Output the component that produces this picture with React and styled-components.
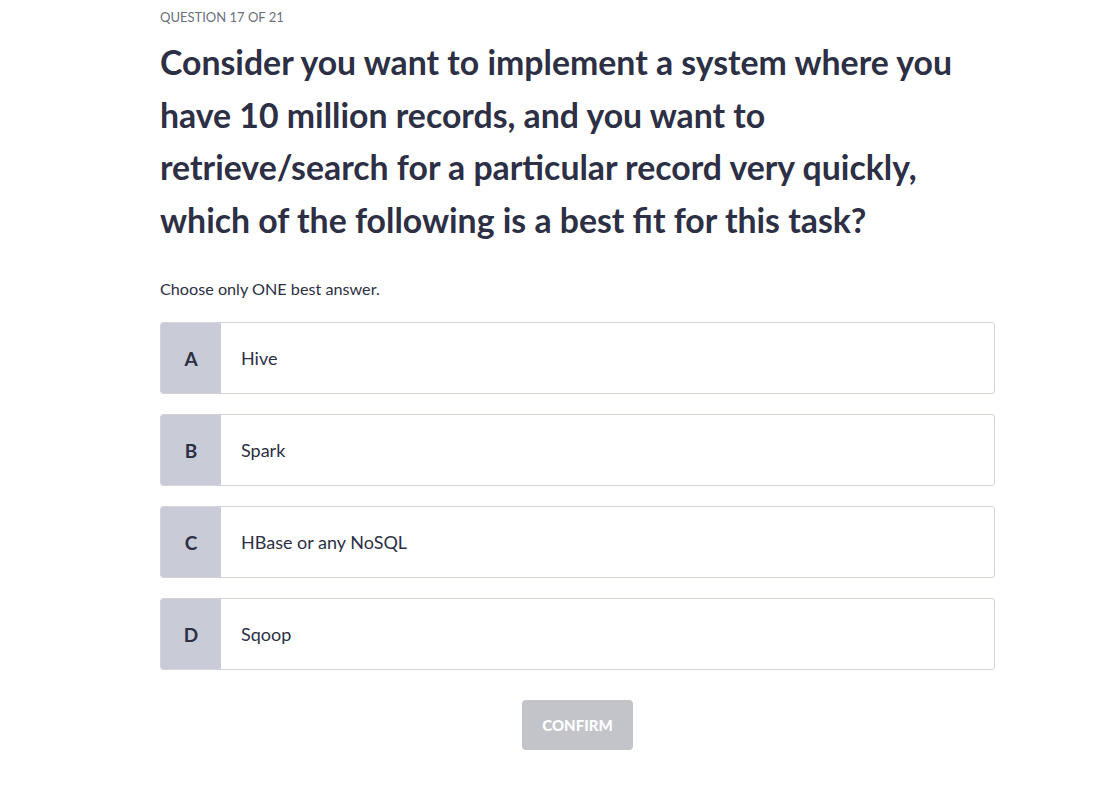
import React from 'react'
import styled, { createGlobalStyle } from 'styled-components'

const GlobalStyle = createGlobalStyle`
  body {
    margin: 0;
    background: #fff;
    font-family: Lato, "Open Sans", sans-serif;
    color: #2d2f45;
  }
`

const Page = styled.div`
  padding: 9px 0 0 160px;
`

const Quiz = styled.div`
  width: 835px;
`

const Counter = styled.div`
  font-size: 13px;
  line-height: 16px;
  color: #6b6f80;
  text-transform: uppercase;
`

const Question = styled.h1`
  margin: 11px 0 0;
  font-size: 33.8px;
  line-height: 52.5px;
  font-weight: 700;
  color: #2d2f45;
`

const Hint = styled.p`
  margin: 33px 0 0;
  font-size: 16.2px;
  line-height: 20px;
`

const Options = styled.div`
  margin-top: 23px;
  display: flex;
  flex-direction: column;
  gap: 20px;
`

const Option = styled.div`
  display: flex;
  height: 72px;
  border: 1px solid #d3d4db;
  border-radius: 3px;
  overflow: hidden;
  box-sizing: border-box;
  cursor: pointer;
`

const Letter = styled.div`
  width: 60px;
  flex-shrink: 0;
  display: flex;
  align-items: center;
  justify-content: center;
  background: #c9ccd6;
  font-size: 19px;
  font-weight: 700;
`

const Label = styled.div`
  display: flex;
  align-items: center;
  padding-left: 20px;
  font-size: 18px;
`

const Footer = styled.div`
  display: flex;
  justify-content: center;
  margin-top: 30px;
`

const Confirm = styled.button`
  width: 111px;
  height: 50px;
  border: none;
  border-radius: 4px;
  background: #c3c4ca;
  color: #fff;
  font-family: inherit;
  font-size: 15px;
  font-weight: 900;
`

const answers = [
  { key: 'A', text: 'Hive' },
  { key: 'B', text: 'Spark' },
  { key: 'C', text: 'HBase or any NoSQL' },
  { key: 'D', text: 'Sqoop' }
]

const App = () => (
  <Page>
    <GlobalStyle />
    <Quiz>
      <Counter>Question 17 of 21</Counter>
      <Question>
        Consider you want to implement a system where you have 10 million records, and you want to
        retrieve/search for a particular record very quickly, which of the following is a best fit for this task?
      </Question>
      <Hint>Choose only ONE best answer.</Hint>
      <Options>
        {answers.map(a => (
          <Option key={a.key}>
            <Letter>{a.key}</Letter>
            <Label>{a.text}</Label>
          </Option>
        ))}
      </Options>
      <Footer>
        <Confirm disabled>CONFIRM</Confirm>
      </Footer>
    </Quiz>
  </Page>
)

export default App
